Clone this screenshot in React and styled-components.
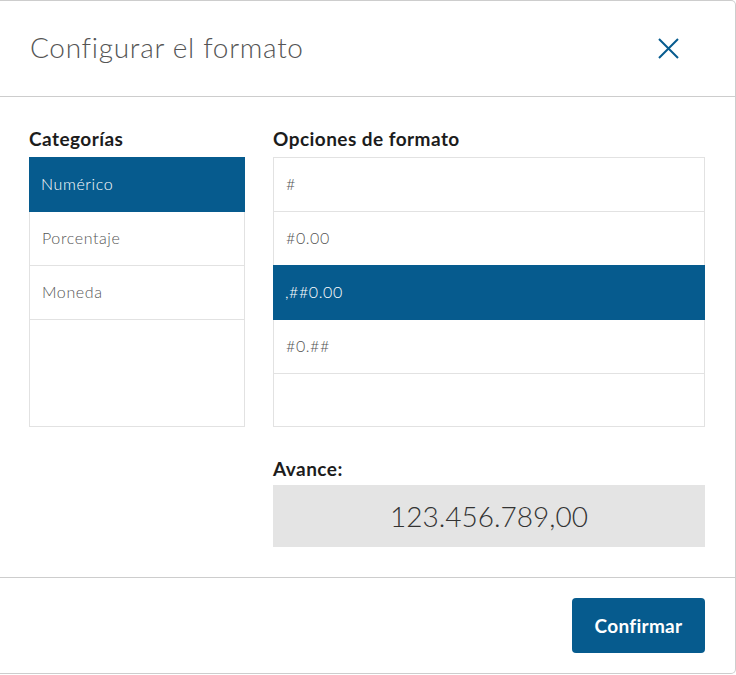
import React, { useState } from 'react';
import styled, { createGlobalStyle } from 'styled-components';

const GlobalStyle = createGlobalStyle`
    body {
        margin: 0;
        background: #fff;
        font-family: Lato, "Open Sans", sans-serif;
    }
`

const BLUE = '#065b8e';

const Dialog = styled.div`
    width: 736px;
    box-sizing: border-box;
    border: 1px solid #cdcdcd;
    border-left: none;
    border-radius: 0 5px 5px 0;
    background: #fff;
    display: flex;
    flex-direction: column;
`

const Header = styled.div`
    height: 96px;
    box-sizing: border-box;
    display: flex;
    align-items: center;
    justify-content: space-between;
    padding: 0 56px 3px 30px;
    border-bottom: 1px solid #cdcdcd;
`

const Title = styled.h1`
    margin: 0;
    font-size: 28px;
    font-weight: 300;
    letter-spacing: 0.7px;
    color: #555;
`

const CloseButton = styled.button`
    border: none;
    background: none;
    padding: 0;
    margin-top: 3px;
    width: 21px;
    height: 21px;
    cursor: pointer;
    display: flex;
`

const Body = styled.div`
    display: grid;
    grid-template-columns: 216px 432px;
    column-gap: 28px;
    padding: 30px 30px 30px 29px;
    border-bottom: 1px solid #cdcdcd;
`

const Column = styled.div`
    display: flex;
    flex-direction: column;
`

const Label = styled.div`
    font-size: 19px;
    font-weight: 700;
    line-height: 24px;
    letter-spacing: 0.45px;
    color: #1c1c1c;
    padding-top: 1px;
    margin-top: ${p => p.spaced ? '29px' : '-1px'};
    margin-bottom: ${p => p.tight ? '4px' : '6px'};
`

const List = styled.div`
    height: 270px;
    box-sizing: border-box;
    border: 1px solid #e2e2e2;
    display: flex;
    flex-direction: column;
`

const Row = styled.div`
    box-sizing: border-box;
    flex-shrink: 0;
    display: flex;
    align-items: center;
    padding: 0 0 2px 12px;
    font-size: 16px;
    font-weight: 300;
    letter-spacing: 0.6px;
    color: ${p => p.active ? '#fff' : '#555'};
    background: ${p => p.active ? BLUE : '#fff'};
    border-bottom: 1px solid ${p => p.active ? BLUE : '#e2e2e2'};
    margin: ${p => p.active ? '-1px -1px 0' : '0'};
    height: ${p => p.active ? '55px' : '54px'};
    cursor: pointer;
`

const Preview = styled.div`
    height: 62px;
    background: #e4e4e4;
    display: flex;
    align-items: center;
    justify-content: center;
    font-size: 28px;
    font-weight: 300;
    color: #333;
`

const Footer = styled.div`
    height: 95px;
    display: flex;
    align-items: center;
    justify-content: flex-end;
    padding-right: 30px;
`

const ConfirmButton = styled.button`
    width: 133px;
    height: 55px;
    border: none;
    border-radius: 4px;
    background: ${BLUE};
    color: #fff;
    font-family: inherit;
    font-size: 19px;
    font-weight: 700;
    letter-spacing: 0.3px;
    cursor: pointer;
`

const categories = ['Numérico', 'Porcentaje', 'Moneda'];
const formats = ['#', '#0.00', ',##0.00', '#0.##'];

export default function App() {
    const [category, setCategory] = useState(0);
    const [format, setFormat] = useState(2);

    return (
        <>
            <GlobalStyle />
            <Dialog>
                <Header>
                    <Title>Configurar el formato</Title>
                    <CloseButton aria-label="Cerrar">
                        <svg width="21" height="21" viewBox="0 0 21 21">
                            <path d="M1 1L20 20M20 1L1 20" stroke={BLUE} strokeWidth="2" fill="none" />
                        </svg>
                    </CloseButton>
                </Header>
                <Body>
                    <Column>
                        <Label>Categorías</Label>
                        <List>
                            {categories.map((c, i) => (
                                <Row key={c} active={i === category} onClick={() => setCategory(i)}>{c}</Row>
                            ))}
                        </List>
                    </Column>
                    <Column>
                        <Label>Opciones de formato</Label>
                        <List>
                            {formats.map((f, i) => (
                                <Row key={f} active={i === format} onClick={() => setFormat(i)}>{f}</Row>
                            ))}
                        </List>
                        <Label spaced tight>Avance:</Label>
                        <Preview>123.456.789,00</Preview>
                    </Column>
                </Body>
                <Footer>
                    <ConfirmButton>Confirmar</ConfirmButton>
                </Footer>
            </Dialog>
        </>
    );
}
